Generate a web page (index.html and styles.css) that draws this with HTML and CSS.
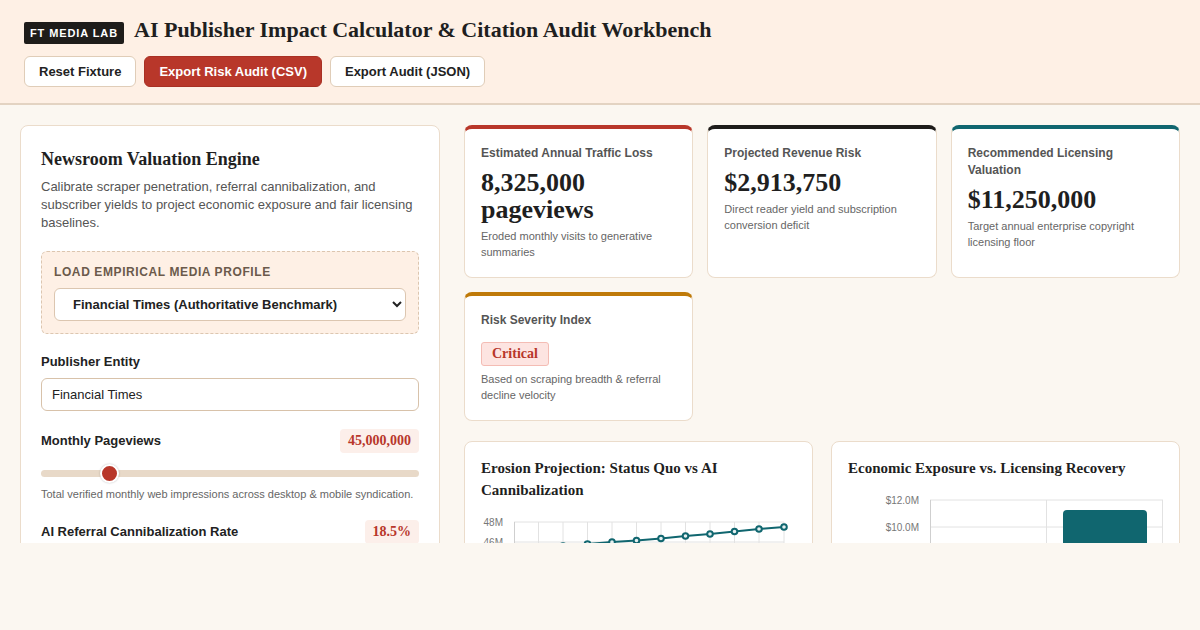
FILE: index.html
```html
<!DOCTYPE html>
<html lang="en">
<head>
<meta charset="utf-8">
<title>AI Publisher Impact Calculator</title>
<link rel="stylesheet" href="styles.css">
</head>
<body>
<header class="header">
  <div class="title-row">
    <span class="badge">FT MEDIA LAB</span>
    <h1 class="title">AI Publisher Impact Calculator &amp; Citation Audit Workbench</h1>
  </div>
  <div class="actions">
    <button class="btn">Reset Fixture</button>
    <button class="btn btn-primary">Export Risk Audit (CSV)</button>
    <button class="btn">Export Audit (JSON)</button>
  </div>
</header>
<main class="main">
  <section class="panel">
    <h2 class="panel-title">Newsroom Valuation Engine</h2>
    <p class="panel-desc">Calibrate scraper penetration, referral cannibalization, and subscriber yields to project economic exposure and fair licensing baselines.</p>
    <div class="profile">
      <div class="profile-label">LOAD EMPIRICAL MEDIA PROFILE</div>
      <select class="select">
        <option>Financial Times (Authoritative Benchmark)</option>
      </select>
    </div>
    <div class="field">
      <label class="field-label">Publisher Entity</label>
      <input class="input" type="text" value="Financial Times">
    </div>
    <div class="field field-pv">
      <div class="field-head">
        <span class="field-label">Monthly Pageviews</span>
        <span class="val">45,000,000</span>
      </div>
      <div class="slider"><div class="thumb"></div></div>
      <div class="help">Total verified monthly web impressions across desktop &amp; mobile syndication.</div>
    </div>
    <div class="field field-ai">
      <div class="field-head">
        <span class="field-label">AI Referral Cannibalization Rate</span>
        <span class="val">18.5%</span>
      </div>
      <div class="slider"><div class="thumb thumb-b"></div></div>
      <div class="help">Share of referral traffic displaced by generative answer engines.</div>
    </div>
  </section>
  <section class="right">
    <div class="metrics">
      <div class="card card-red">
        <div class="card-label">Estimated Annual Traffic Loss</div>
        <div class="card-value">8,325,000 pageviews</div>
        <div class="card-desc">Eroded monthly visits to generative summaries</div>
      </div>
      <div class="card card-black">
        <div class="card-label">Projected Revenue Risk</div>
        <div class="card-value">$2,913,750</div>
        <div class="card-desc">Direct reader yield and subscription conversion deficit</div>
      </div>
      <div class="card card-teal">
        <div class="card-label">Recommended Licensing Valuation</div>
        <div class="card-value">$11,250,000</div>
        <div class="card-desc">Target annual enterprise copyright licensing floor</div>
      </div>
      <div class="card card-amber">
        <div class="card-label">Risk Severity Index</div>
        <div class="severity"><span class="pill">Critical</span></div>
        <div class="card-desc">Based on scraping breadth &amp; referral decline velocity</div>
      </div>
    </div>
    <div class="charts">
      <div class="chart">
        <h3 class="chart-title">Erosion Projection: Status Quo vs AI Cannibalization</h3>
        <svg class="plot plot-line" width="315" height="120" viewBox="0 0 315 120">
          <g stroke="#e2e2e2" stroke-width="1">
            <line x1="33" y1="6" x2="303" y2="6"/>
            <line x1="33" y1="26" x2="303" y2="26"/>
            <line x1="33" y1="46" x2="303" y2="46"/>
            <line x1="57.5" y1="6" x2="57.5" y2="110"/>
            <line x1="82" y1="6" x2="82" y2="110"/>
            <line x1="106.5" y1="6" x2="106.5" y2="110"/>
            <line x1="131" y1="6" x2="131" y2="110"/>
            <line x1="155.5" y1="6" x2="155.5" y2="110"/>
            <line x1="180" y1="6" x2="180" y2="110"/>
            <line x1="204.5" y1="6" x2="204.5" y2="110"/>
            <line x1="229" y1="6" x2="229" y2="110"/>
            <line x1="253.5" y1="6" x2="253.5" y2="110"/>
            <line x1="278" y1="6" x2="278" y2="110"/>
            <line x1="303" y1="6" x2="303" y2="110"/>
          </g>
          <line x1="33.5" y1="6" x2="33.5" y2="110" stroke="#cfcfcf"/>
          <g font-family="Liberation Sans, Arial, sans-serif" font-size="10" fill="#777" text-anchor="end">
            <text x="22" y="9.5">48M</text>
            <text x="22" y="29.5">46M</text>
          </g>
          <polyline fill="none" stroke="#10666f" stroke-width="2" points="33,34 57.5,32 82,30 106.5,28 131,26 155.5,24.5 180,22.5 204.5,20 229,18 253.5,15.5 278,13 303,11"/>
          <g fill="#e6f0f1" stroke="#10666f" stroke-width="2">
            <circle cx="33" cy="34" r="2.8"/>
            <circle cx="57.5" cy="32" r="2.8"/>
            <circle cx="82" cy="30" r="2.8"/>
            <circle cx="106.5" cy="28" r="2.8"/>
            <circle cx="131" cy="26" r="2.8"/>
            <circle cx="155.5" cy="24.5" r="2.8"/>
            <circle cx="180" cy="22.5" r="2.8"/>
            <circle cx="204.5" cy="20" r="2.8"/>
            <circle cx="229" cy="18" r="2.8"/>
            <circle cx="253.5" cy="15.5" r="2.8"/>
            <circle cx="278" cy="13" r="2.8"/>
            <circle cx="303" cy="11" r="2.8"/>
          </g>
        </svg>
      </div>
      <div class="chart">
        <h3 class="chart-title">Economic Exposure vs. Licensing Recovery</h3>
        <svg class="plot plot-bar" width="315" height="120" viewBox="0 0 315 120">
          <g stroke="#e2e2e2" stroke-width="1">
            <line x1="82" y1="6" x2="315" y2="6"/>
            <line x1="82" y1="33" x2="315" y2="33"/>
            <line x1="82" y1="60" x2="315" y2="60"/>
            <line x1="198.5" y1="6" x2="198.5" y2="120"/>
            <line x1="314.5" y1="6" x2="314.5" y2="120"/>
          </g>
          <line x1="82.5" y1="6" x2="82.5" y2="120" stroke="#cfcfcf"/>
          <g font-family="Liberation Sans, Arial, sans-serif" font-size="10" fill="#777" text-anchor="end">
            <text x="71" y="9.5">$12.0M</text>
            <text x="71" y="36.5">$10.0M</text>
          </g>
          <path d="M215,20 a4,4 0 0 1 4,-4 h76 a4,4 0 0 1 4,4 V120 H215 Z" fill="#10666f"/>
        </svg>
      </div>
    </div>
  </section>
</main>
</body>
</html>
```
FILE: styles.css
```css
* { box-sizing: border-box; }
html, body { margin: 0; padding: 0; }
body {
  background: #fbf7f1;
  font-family: "Liberation Sans", Arial, sans-serif;
  color: #1f1f1f;
  height: 630px;
  overflow: hidden;
}
.header {
  background: #fef0e5;
  border-bottom: 2px solid #e3d3c2;
  padding: 16px 24px 16px;
  height: 105px;
}
.title-row {
  display: flex;
  align-items: center;
  gap: 10px;
  height: 28px;
}
.badge {
  background: #1e1c1a;
  color: #fff;
  font-size: 11px;
  font-weight: 700;
  letter-spacing: 0.9px;
  padding: 0 6px;
  height: 22px;
  line-height: 22px;
  border-radius: 2px;
  margin-top: 6px;
}
.title {
  margin: 0;
  font-family: "Liberation Serif", "Times New Roman", serif;
  font-size: 22px;
  font-weight: 700;
  line-height: 28px;
  color: #1f1f1f;
}
.actions {
  display: flex;
  gap: 8px;
  margin-top: 12px;
}
.btn {
  font-family: "Liberation Sans", Arial, sans-serif;
  font-size: 13px;
  font-weight: 700;
  height: 31px;
  padding: 0 14px;
  background: #fff;
  color: #222;
  border: 1px solid #e0cdb8;
  border-radius: 6px;
}
.btn-primary {
  background: #b8372a;
  color: #fff;
  border-color: #a83024;
}
.main {
  display: flex;
  gap: 24px;
  align-items: flex-start;
  padding: 20px 20px 0;
  height: 438px;
  overflow: hidden;
}
.panel {
  width: 420px;
  flex: none;
  background: #fff;
  border: 1px solid #ebdccb;
  border-radius: 8px;
  padding: 21px 20px 20px;
}
.panel-title {
  margin: 0;
  font-family: "Liberation Serif", "Times New Roman", serif;
  font-size: 18px;
  font-weight: 700;
  line-height: 24px;
}
.panel-desc {
  margin: 7px 0 0;
  color: #555;
  font-size: 13px;
  line-height: 18px;
}
.profile {
  margin-top: 19px;
  background: #fef0e5;
  border: 1px dashed #dcc6b0;
  border-radius: 6px;
  padding: 12px 12px 12px;
}
.profile-label {
  font-size: 12px;
  font-weight: 700;
  letter-spacing: 0.6px;
  color: #6b5a4b;
  line-height: 16px;
}
.select {
  margin-top: 8px;
  width: 100%;
  height: 33px;
  font-family: "Liberation Sans", Arial, sans-serif;
  font-size: 13px;
  font-weight: 700;
  color: #222;
  background: #fff;
  border: 1px solid #dcc6b0;
  border-radius: 6px;
  padding: 0 14px;
}
.field { margin-top: 20px; }
.field-pv { margin-top: 18px; }
.field-ai { margin-top: 19px; }
.field-label {
  display: block;
  font-size: 13px;
  font-weight: 700;
  color: #222;
  line-height: 16px;
}
.input {
  margin-top: 8px;
  width: 100%;
  height: 33px;
  font-family: "Liberation Sans", Arial, sans-serif;
  font-size: 13px;
  color: #222;
  background: #fff;
  border: 1px solid #d8c2aa;
  border-radius: 6px;
  padding: 0 10px;
}
.field-head {
  display: flex;
  justify-content: space-between;
  align-items: center;
}
.val {
  font-family: "Liberation Serif", "Times New Roman", serif;
  font-size: 14px;
  font-weight: 700;
  color: #b8372a;
  background: #fcefea;
  border-radius: 4px;
  padding: 0 8px;
  height: 24px;
  line-height: 24px;
}
.slider {
  position: relative;
  margin-top: 17px;
  height: 7px;
  background: #e8d9c8;
  border-radius: 4px;
}
.thumb {
  position: absolute;
  left: 59px;
  top: -6px;
  width: 19px;
  height: 19px;
  border-radius: 50%;
  background: #b8372a;
  border: 2px solid #fff;
  box-shadow: 0 0 2px rgba(0,0,0,0.25);
}
.thumb-b { left: 110px; }
.help {
  margin-top: 10px;
  font-size: 11px;
  color: #666;
  line-height: 14px;
}
.right {
  flex: 1;
  min-width: 0;
}
.metrics {
  display: grid;
  grid-template-columns: repeat(3, 1fr);
  gap: 14px;
  align-items: start;
}
.card {
  background: #fff;
  border: 1px solid #ebdccb;
  border-top: 4px solid #b8372a;
  border-radius: 8px;
  padding: 16px 16px 16px;
}
.card-red { border-top-color: #b8372a; }
.card-black { border-top-color: #1e1c1a; }
.card-teal { border-top-color: #10666f; }
.card-amber { border-top-color: #bf7a09; height: 129px; }
.metrics .card:nth-child(-n+3) { height: 153px; }
.card-label {
  font-size: 12px;
  font-weight: 700;
  color: #555;
  line-height: 17px;
}
.card-value {
  margin-top: 7px;
  font-family: "Liberation Serif", "Times New Roman", serif;
  font-size: 26px;
  font-weight: 700;
  line-height: 27px;
  color: #1f1f1f;
}
.card-desc {
  margin-top: 5px;
  font-size: 11px;
  color: #666;
  line-height: 16px;
}
.severity { margin-top: 13px; }
.pill {
  display: inline-block;
  font-family: "Liberation Serif", "Times New Roman", serif;
  font-size: 14px;
  font-weight: 700;
  color: #b8372a;
  background: #fde4e1;
  border: 1px solid #f4bcb4;
  border-radius: 3px;
  padding: 0 10px;
  height: 24px;
  line-height: 22px;
}
.card-amber .card-desc { margin-top: 5px; }
.charts {
  margin-top: 20px;
  display: grid;
  grid-template-columns: 1fr 1fr;
  gap: 18px;
}
.chart {
  background: #fff;
  border: 1px solid #ebdccb;
  border-radius: 8px;
  padding: 15px 16px 16px;
  height: 240px;
}
.chart-title {
  margin: 0;
  font-family: "Liberation Serif", "Times New Roman", serif;
  font-size: 15px;
  font-weight: 700;
  line-height: 22px;
  color: #1f1f1f;
}
.plot {
  display: block;
}
.plot-line { margin-top: 15px; }
.plot-bar { margin-top: 15px; }
```
